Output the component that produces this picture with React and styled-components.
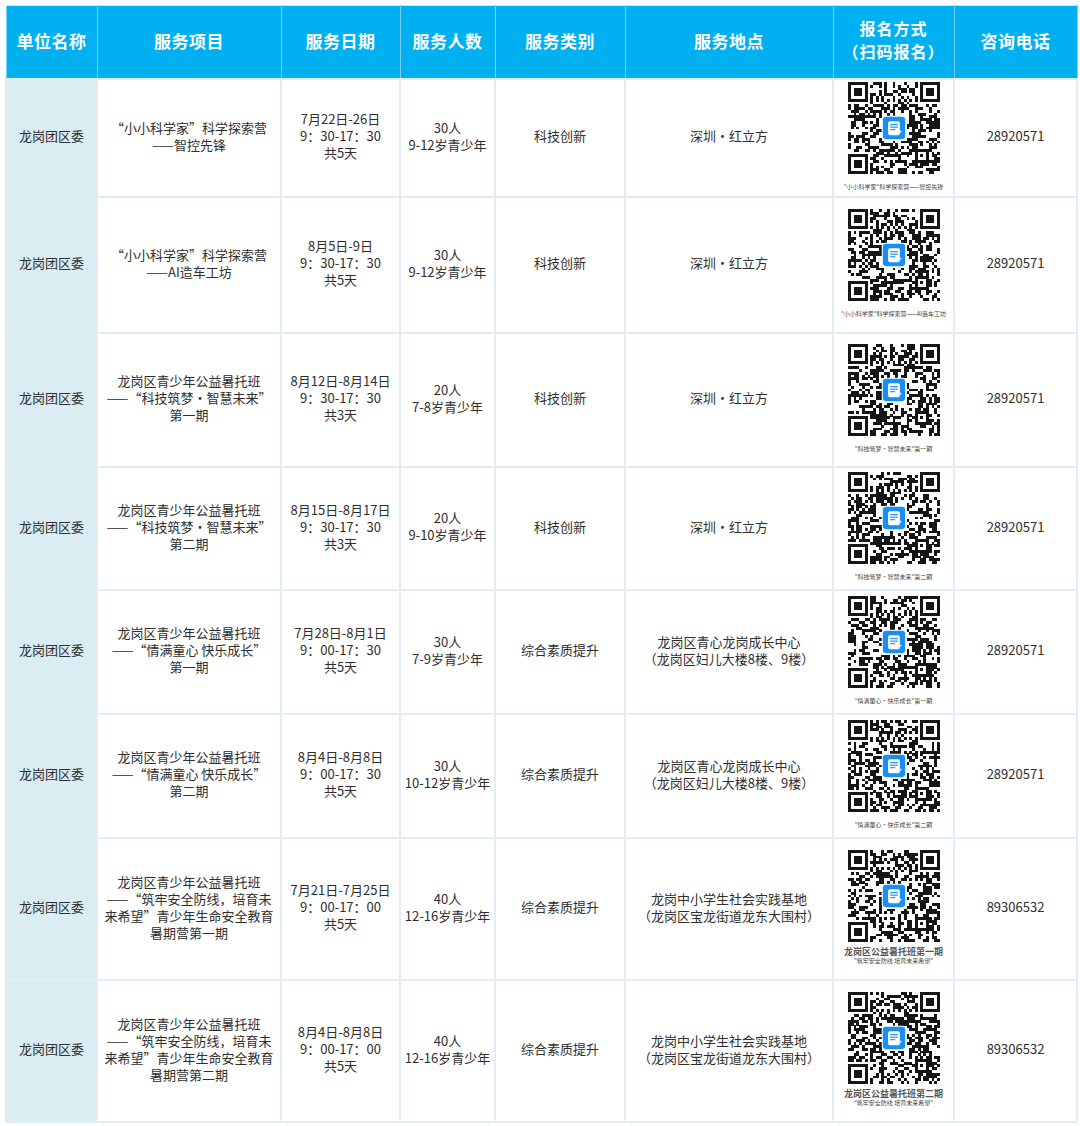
import React from 'react'
import styled, { createGlobalStyle } from 'styled-components'

const GlobalStyle = createGlobalStyle`
    body {
        margin: 0;
        background: #ffffff;
        font-family: "Noto Sans CJK SC", "Noto Sans", sans-serif;
    }
`

const columns = [
    { title: ['单位名称'], width: 91 },
    { title: ['服务项目'], width: 184 },
    { title: ['服务日期'], width: 119 },
    { title: ['服务人数'], width: 95 },
    { title: ['服务类别'], width: 130 },
    { title: ['服务地点'], width: 208 },
    { title: ['报名方式', '（扫码报名）'], width: 121 },
    { title: ['咨询电话'], width: 123 },
]

const rows = [
    {
        h: 118,
        project: ['“小小科学家”科学探索营', '——智控先锋'],
        date: ['7月22日-26日', '9：30-17：30', '共5天'],
        people: ['30人', '9-12岁青少年'],
        kind: '科技创新',
        place: ['深圳・红立方'],
        caption: ['"小小科学家"科学探索营——智控先锋'],
        phone: '28920571',
        seed: 11,
    },
    {
        h: 136,
        project: ['“小小科学家”科学探索营', '——AI造车工坊'],
        date: ['8月5日-9日', '9：30-17：30', '共5天'],
        people: ['30人', '9-12岁青少年'],
        kind: '科技创新',
        place: ['深圳・红立方'],
        caption: ['"小小科学家"科学探索营——AI造车工坊'],
        phone: '28920571',
        seed: 23,
    },
    {
        h: 134,
        project: ['龙岗区青少年公益暑托班', '——“科技筑梦・智慧未来”', '第一期'],
        date: ['8月12日-8月14日', '9：30-17：30', '共3天'],
        people: ['20人', '7-8岁青少年'],
        kind: '科技创新',
        place: ['深圳・红立方'],
        caption: ['"科技筑梦·智慧未来"第一期'],
        phone: '28920571',
        seed: 37,
    },
    {
        h: 123,
        project: ['龙岗区青少年公益暑托班', '——“科技筑梦・智慧未来”', '第二期'],
        date: ['8月15日-8月17日', '9：30-17：30', '共3天'],
        people: ['20人', '9-10岁青少年'],
        kind: '科技创新',
        place: ['深圳・红立方'],
        caption: ['"科技筑梦·智慧未来"第二期'],
        phone: '28920571',
        seed: 41,
    },
    {
        h: 124,
        project: ['龙岗区青少年公益暑托班', '——“情满童心 快乐成长”', '第一期'],
        date: ['7月28日-8月1日', '9：00-17：30', '共5天'],
        people: ['30人', '7-9岁青少年'],
        kind: '综合素质提升',
        place: ['龙岗区青心龙岗成长中心', '（龙岗区妇儿大楼8楼、9楼）'],
        caption: ['"情满童心·快乐成长"第一期'],
        phone: '28920571',
        seed: 53,
    },
    {
        h: 124,
        project: ['龙岗区青少年公益暑托班', '——“情满童心 快乐成长”', '第二期'],
        date: ['8月4日-8月8日', '9：00-17：30', '共5天'],
        people: ['30人', '10-12岁青少年'],
        kind: '综合素质提升',
        place: ['龙岗区青心龙岗成长中心', '（龙岗区妇儿大楼8楼、9楼）'],
        caption: ['"情满童心·快乐成长"第二期'],
        phone: '28920571',
        seed: 67,
    },
    {
        h: 142,
        project: ['龙岗区青少年公益暑托班', '——“筑牢安全防线，培育未', '来希望”青少年生命安全教育', '暑期营第一期'],
        date: ['7月21日-7月25日', '9：00-17：00', '共5天'],
        people: ['40人', '12-16岁青少年'],
        kind: '综合素质提升',
        place: ['龙岗中小学生社会实践基地', '（龙岗区宝龙街道龙东大围村）'],
        caption: ['龙岗区公益暑托班第一期', '"筑牢安全防线 培育未来希望"'],
        phone: '89306532',
        seed: 79,
    },
    {
        h: 142,
        project: ['龙岗区青少年公益暑托班', '——“筑牢安全防线，培育未', '来希望”青少年生命安全教育', '暑期营第二期'],
        date: ['8月4日-8月8日', '9：00-17：00', '共5天'],
        people: ['40人', '12-16岁青少年'],
        kind: '综合素质提升',
        place: ['龙岗中小学生社会实践基地', '（龙岗区宝龙街道龙东大围村）'],
        caption: ['龙岗区公益暑托班第二期', '"筑牢安全防线 培育未来希望"'],
        phone: '89306532',
        seed: 97,
    },
]

// small seeded random so the qr patterns stay the same on every run
function makeRandom(seed) {
    let a = seed * 2654435761
    return () => {
        a |= 0
        a = (a + 0x6d2b79f5) | 0
        let t = Math.imul(a ^ (a >>> 15), 1 | a)
        t = (t + Math.imul(t ^ (t >>> 7), 61 | t)) ^ t
        return ((t ^ (t >>> 14)) >>> 0) / 4294967296
    }
}

const N = 33
const FINDERS = [[0, 0], [N - 7, 0], [0, N - 7]]

function reserved(x, y) {
    if (FINDERS.some(([fx, fy]) => x >= fx - 1 && x <= fx + 7 && y >= fy - 1 && y <= fy + 7)) return true
    if (x >= N - 9 && x <= N - 5 && y >= N - 9 && y <= N - 5) return true
    if (x >= 12 && x <= 20 && y >= 12 && y <= 20) return true
    return false
}

function QrCode({ seed, size }) {
    const rand = makeRandom(seed)
    const cells = []
    for (let y = 0; y < N; y++) {
        for (let x = 0; x < N; x++) {
            const r = rand()
            if (reserved(x, y)) continue
            if (x === 6 || y === 6) {
                if ((x + y) % 2 === 0) cells.push(<rect key={`${x}-${y}`} x={x} y={y} width="1.02" height="1.02" />)
                continue
            }
            if (r < 0.5) cells.push(<rect key={`${x}-${y}`} x={x} y={y} width="1.02" height="1.02" />)
        }
    }
    const finders = FINDERS.map(([fx, fy]) => (
        <g key={`f${fx}${fy}`}>
            <rect x={fx} y={fy} width="7" height="7" />
            <rect x={fx + 1} y={fy + 1} width="5" height="5" fill="#fff" />
            <rect x={fx + 2} y={fy + 2} width="3" height="3" />
        </g>
    ))
    const ax = N - 9
    return (
        <svg width={size} height={size} viewBox={`0 0 ${N} ${N}`} shapeRendering="crispEdges">
            <g fill="#151515">
                {cells}
                {finders}
                <rect x={ax} y={ax} width="5" height="5" />
                <rect x={ax + 1} y={ax + 1} width="3" height="3" fill="#fff" />
                <rect x={ax + 2} y={ax + 2} width="1" height="1" />
            </g>
            <g shapeRendering="auto">
                <rect x="12.1" y="12.1" width="8.8" height="8.8" rx="1.3" fill="#fff" />
                <rect x="12.5" y="12.5" width="8" height="8" rx="1.1" fill="#1b8ef2" />
                <rect x="14.4" y="14.1" width="4.2" height="5" rx="0.6" fill="#fff" />
                <rect x="15.1" y="15.1" width="2.8" height="0.4" fill="#1b8ef2" />
                <rect x="15.1" y="16" width="2.8" height="0.4" fill="#1b8ef2" />
                <rect x="15.1" y="16.9" width="1.8" height="0.4" fill="#1b8ef2" />
                <path d="M17.5 18.8 L18.9 17.4 L19.3 17.8 L17.9 19.2 Z" fill="#d6eaff" />
            </g>
        </svg>
    )
}

export default function App() {
    return (
        <>
            <GlobalStyle />
            <Page>
                <Table>
                    <colgroup>
                        {columns.map((c, i) => <col key={i} style={{ width: c.width }} />)}
                    </colgroup>
                    <thead>
                        <tr>
                            {columns.map((c, i) => (
                                <HeadCell key={i} $twoLine={c.title.length > 1}>
                                    {c.title.map(t => <Line key={t}>{t}</Line>)}
                                </HeadCell>
                            ))}
                        </tr>
                    </thead>
                    <tbody>
                        {rows.map((row, i) => (
                            <Row key={i} $h={row.h}>
                                <UnitCell>龙岗团区委</UnitCell>
                                <Cell>{row.project.map(t => <Line key={t}>{t}</Line>)}</Cell>
                                <Cell>{row.date.map(t => <Line key={t}>{t}</Line>)}</Cell>
                                <Cell>{row.people.map(t => <Line key={t}>{t}</Line>)}</Cell>
                                <Cell>{row.kind}</Cell>
                                <Cell>{row.place.map(t => <Line key={t}>{t}</Line>)}</Cell>
                                <Cell>
                                    <QrBox>
                                        <QrCode seed={row.seed} size={92} />
                                        {row.caption.length > 1 ? (
                                            <>
                                                <BigCaption>{row.caption[0]}</BigCaption>
                                                <Caption $tight>{row.caption[1]}</Caption>
                                            </>
                                        ) : (
                                            <Caption>{row.caption[0]}</Caption>
                                        )}
                                    </QrBox>
                                </Cell>
                                <Cell>{row.phone}</Cell>
                            </Row>
                        ))}
                    </tbody>
                </Table>
            </Page>
        </>
    )
}

const Page = styled.div`
    padding: 5px 4px 4px 5px;
    width: 1080px;
    box-sizing: border-box;
`

const Table = styled.table`
    width: 1071px;
    table-layout: fixed;
    border-collapse: collapse;
    font-family: "Noto Sans CJK SC", "Noto Sans", sans-serif;
`

const HeadCell = styled.th`
    height: 68px;
    padding: 0 0 4px;
    background: #00b0f0;
    color: #ffffff;
    font-size: ${p => (p.$twoLine ? '16px' : '17px')};
    font-weight: 700;
    line-height: ${p => (p.$twoLine ? '23.5px' : '21px')};
    letter-spacing: ${p => (p.$twoLine ? '1px' : '0.5px')};
    text-align: center;
    vertical-align: middle;
    border: 1px solid #7cd2f6;
    border-top-color: #cfe3f5;
`

const Row = styled.tr`
    height: ${p => p.$h}px;
`

const Cell = styled.td`
    padding: 0 2px 5px;
    font-size: 13px;
    line-height: 17px;
    color: #2e2e2e;
    text-align: center;
    vertical-align: middle;
    border: 2px solid #e3edf8;
    background: #ffffff;
`

const UnitCell = styled(Cell)`
    background: #daedf3;
    border-left-color: #daedf3;
`

const Line = styled.div`
    white-space: nowrap;
`

const QrBox = styled.div`
    display: flex;
    flex-direction: column;
    align-items: center;
    gap: 6px;
`

const Caption = styled.div`
    font-size: 6px;
    line-height: 7px;
    color: #444;
    white-space: nowrap;
    margin-top: ${p => (p.$tight ? '-6px' : '3px')};
`

const BigCaption = styled.div`
    font-size: 9px;
    line-height: 11px;
    font-weight: 700;
    color: #555;
    white-space: nowrap;
    margin-top: -2px;
`
